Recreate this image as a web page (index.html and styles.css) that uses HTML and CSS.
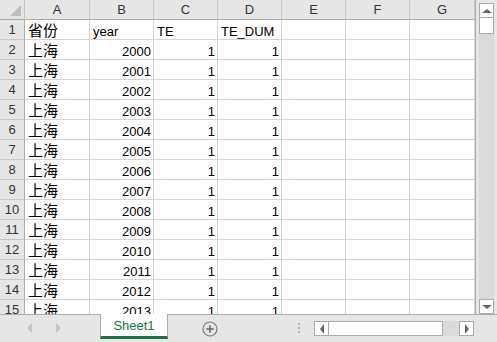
FILE: index.html
```html
<!DOCTYPE html>
<html lang="zh">
<head>
    <meta charset="UTF-8">
    <title>Sheet1</title>
    <link rel="stylesheet" href="styles.css">
</head>
<body>
    <div class="app">
        <div class="main">
            <div class="sheet">
                <div class="row head">
                    <div class="corner"><span class="tri"></span></div>
                    <div class="colHead">A</div>
                    <div class="colHead">B</div>
                    <div class="colHead">C</div>
                    <div class="colHead">D</div>
                    <div class="colHead">E</div>
                    <div class="colHead">F</div>
                    <div class="colHead">G</div>
                </div>
                <div class="row">
                    <div class="rowHead">1</div>
                    <div class="cell cjk">省份</div>
                    <div class="cell">year</div>
                    <div class="cell">TE</div>
                    <div class="cell">TE_DUM</div>
                    <div class="cell"></div><div class="cell"></div><div class="cell"></div>
                </div>
                <div class="row">
                    <div class="rowHead">2</div>
                    <div class="cell cjk">上海</div>
                    <div class="cell num">2000</div>
                    <div class="cell num">1</div>
                    <div class="cell num">1</div>
                    <div class="cell"></div><div class="cell"></div><div class="cell"></div>
                </div>
                <div class="row">
                    <div class="rowHead">3</div>
                    <div class="cell cjk">上海</div>
                    <div class="cell num">2001</div>
                    <div class="cell num">1</div>
                    <div class="cell num">1</div>
                    <div class="cell"></div><div class="cell"></div><div class="cell"></div>
                </div>
                <div class="row">
                    <div class="rowHead">4</div>
                    <div class="cell cjk">上海</div>
                    <div class="cell num">2002</div>
                    <div class="cell num">1</div>
                    <div class="cell num">1</div>
                    <div class="cell"></div><div class="cell"></div><div class="cell"></div>
                </div>
                <div class="row">
                    <div class="rowHead">5</div>
                    <div class="cell cjk">上海</div>
                    <div class="cell num">2003</div>
                    <div class="cell num">1</div>
                    <div class="cell num">1</div>
                    <div class="cell"></div><div class="cell"></div><div class="cell"></div>
                </div>
                <div class="row">
                    <div class="rowHead">6</div>
                    <div class="cell cjk">上海</div>
                    <div class="cell num">2004</div>
                    <div class="cell num">1</div>
                    <div class="cell num">1</div>
                    <div class="cell"></div><div class="cell"></div><div class="cell"></div>
                </div>
                <div class="row">
                    <div class="rowHead">7</div>
                    <div class="cell cjk">上海</div>
                    <div class="cell num">2005</div>
                    <div class="cell num">1</div>
                    <div class="cell num">1</div>
                    <div class="cell"></div><div class="cell"></div><div class="cell"></div>
                </div>
                <div class="row">
                    <div class="rowHead">8</div>
                    <div class="cell cjk">上海</div>
                    <div class="cell num">2006</div>
                    <div class="cell num">1</div>
                    <div class="cell num">1</div>
                    <div class="cell"></div><div class="cell"></div><div class="cell"></div>
                </div>
                <div class="row">
                    <div class="rowHead">9</div>
                    <div class="cell cjk">上海</div>
                    <div class="cell num">2007</div>
                    <div class="cell num">1</div>
                    <div class="cell num">1</div>
                    <div class="cell"></div><div class="cell"></div><div class="cell"></div>
                </div>
                <div class="row">
                    <div class="rowHead">10</div>
                    <div class="cell cjk">上海</div>
                    <div class="cell num">2008</div>
                    <div class="cell num">1</div>
                    <div class="cell num">1</div>
                    <div class="cell"></div><div class="cell"></div><div class="cell"></div>
                </div>
                <div class="row">
                    <div class="rowHead">11</div>
                    <div class="cell cjk">上海</div>
                    <div class="cell num">2009</div>
                    <div class="cell num">1</div>
                    <div class="cell num">1</div>
                    <div class="cell"></div><div class="cell"></div><div class="cell"></div>
                </div>
                <div class="row">
                    <div class="rowHead">12</div>
                    <div class="cell cjk">上海</div>
                    <div class="cell num">2010</div>
                    <div class="cell num">1</div>
                    <div class="cell num">1</div>
                    <div class="cell"></div><div class="cell"></div><div class="cell"></div>
                </div>
                <div class="row">
                    <div class="rowHead">13</div>
                    <div class="cell cjk">上海</div>
                    <div class="cell num">2011</div>
                    <div class="cell num">1</div>
                    <div class="cell num">1</div>
                    <div class="cell"></div><div class="cell"></div><div class="cell"></div>
                </div>
                <div class="row">
                    <div class="rowHead">14</div>
                    <div class="cell cjk">上海</div>
                    <div class="cell num">2012</div>
                    <div class="cell num">1</div>
                    <div class="cell num">1</div>
                    <div class="cell"></div><div class="cell"></div><div class="cell"></div>
                </div>
                <div class="row">
                    <div class="rowHead">15</div>
                    <div class="cell cjk">上海</div>
                    <div class="cell num">2013</div>
                    <div class="cell num">1</div>
                    <div class="cell num">1</div>
                    <div class="cell"></div><div class="cell"></div><div class="cell"></div>
                </div>
            </div>
            <div class="vscroll">
                <div class="sbBtn"><span class="arrUp"></span></div>
                <div class="vThumb"></div>
                <div class="vTrack"></div>
                <div class="sbBtn"><span class="arrDown"></span></div>
            </div>
        </div>
        <div class="bottom">
            <div class="nav">
                <span class="navLeft"></span>
                <span class="navRight"></span>
            </div>
            <div class="tab">Sheet1</div>
            <div class="addSheet">
                <svg width="16" height="16" viewBox="0 0 16 16">
                    <circle cx="8" cy="8" r="7" fill="none" stroke="#7a7a7a" stroke-width="1.2"/>
                    <path d="M8 4.2v7.6M4.2 8h7.6" stroke="#6a6a6a" stroke-width="1.6"/>
                </svg>
            </div>
            <div class="dots"><i></i><i></i><i></i></div>
            <div class="hscroll">
                <div class="sbBtn"><span class="arrLeft"></span></div>
                <div class="hThumb"></div>
                <div class="hTrack"></div>
                <div class="sbBtn"><span class="arrRight"></span></div>
            </div>
        </div>
    </div>
</body>
</html>
```

FILE: styles.css
```css
* {
    box-sizing: border-box;
    margin: 0;
    padding: 0;
}
body {
    font-family: "Liberation Sans", Arial, "Noto Sans CJK SC", sans-serif;
    font-size: 13px;
    color: #000;
    background: #fff;
}
.app {
    width: 497px;
    height: 342px;
    display: flex;
    flex-direction: column;
    overflow: hidden;
}
.main {
    display: flex;
    height: 314px;
}
.sheet {
    width: 476px;
    height: 314px;
    overflow: hidden;
    border-right: 1px solid #ababab;
}
.row {
    display: grid;
    grid-template-columns: 25px 65px 64px 64px 64px 64px 64px 65px;
    height: 20px;
}
.row > div {
    border-right: 1px solid #d4d4d4;
    border-bottom: 1px solid #d4d4d4;
    height: 20px;
    overflow: hidden;
    white-space: nowrap;
}
.head > div {
    background: #e6e6e6;
    border-right-color: #c6c6c6;
    border-bottom-color: #ababab;
    color: #333;
    text-align: center;
    line-height: 19px;
}
.corner {
    position: relative;
}
.corner .tri {
    position: absolute;
    right: 3px;
    bottom: 3px;
    width: 0;
    height: 0;
    border-left: 11px solid transparent;
    border-bottom: 11px solid #bdbdbd;
}
.row > .rowHead {
    background: #e6e6e6;
    border-right-color: #ababab;
    border-bottom-color: #c6c6c6;
    color: #333;
    text-align: center;
    line-height: 20px;
}
.cell {
    padding: 4px 2px 0 3px;
    line-height: 15px;
}
.cell.num {
    text-align: right;
}
.cell.cjk {
    font-family: "Noto Sans CJK SC", sans-serif;
    font-size: 15px;
    padding-top: 0;
    line-height: 19px;
}
.vscroll {
    width: 21px;
    background: #e6e6e6;
    display: flex;
    flex-direction: column;
    padding: 3px 3px 0 3px;
}
.sbBtn {
    width: 15px;
    height: 15px;
    background: #fff;
    border: 1px solid #ababab;
    display: flex;
    align-items: center;
    justify-content: center;
    flex-shrink: 0;
}
.vThumb {
    height: 16px;
    background: #fff;
    border: 1px solid #ababab;
    border-top: 0;
}
.vTrack {
    flex: 1;
    background: #dadada;
}
.arrUp, .arrDown, .arrLeft, .arrRight {
    width: 0;
    height: 0;
}
.arrUp {
    border-left: 5px solid transparent;
    border-right: 5px solid transparent;
    border-bottom: 4px solid #666;
}
.arrDown {
    border-left: 5px solid transparent;
    border-right: 5px solid transparent;
    border-top: 4px solid #666;
}
.arrLeft {
    border-top: 5px solid transparent;
    border-bottom: 5px solid transparent;
    border-right: 4px solid #666;
}
.arrRight {
    border-top: 5px solid transparent;
    border-bottom: 5px solid transparent;
    border-left: 4px solid #666;
}
.bottom {
    height: 28px;
    background: #e6e6e6;
    border-top: 1px solid #ababab;
    display: flex;
    align-items: flex-start;
}
.nav {
    width: 100px;
    display: flex;
    gap: 24px;
    padding: 8px 0 0 27px;
}
.navLeft {
    border-top: 5px solid transparent;
    border-bottom: 5px solid transparent;
    border-right: 5px solid #c4c4c4;
}
.navRight {
    border-top: 5px solid transparent;
    border-bottom: 5px solid transparent;
    border-left: 5px solid #c4c4c4;
}
.tab {
    width: 68px;
    height: 25px;
    margin-top: -1px;
    background: #fff;
    border-left: 1px solid #ababab;
    border-right: 1px solid #ababab;
    border-bottom: 3px solid #217346;
    color: #217346;
    font-size: 13px;
    text-align: center;
    line-height: 24px;
}
.addSheet {
    margin: 6px 0 0 34px;
    width: 16px;
    height: 16px;
}
.dots {
    margin: 8px 0 0 80px;
    width: 2px;
    display: flex;
    flex-direction: column;
    gap: 2px;
}
.dots i {
    display: block;
    width: 2px;
    height: 2px;
    background: #b4b4b4;
}
.hscroll {
    margin: 6px 0 0 14px;
    width: 160px;
    display: flex;
}
.hThumb {
    width: 114px;
    height: 15px;
    background: #fff;
    border: 1px solid #ababab;
    border-left: 0;
}
.hTrack {
    flex: 1;
    height: 15px;
    background: #dadada;
}
```
